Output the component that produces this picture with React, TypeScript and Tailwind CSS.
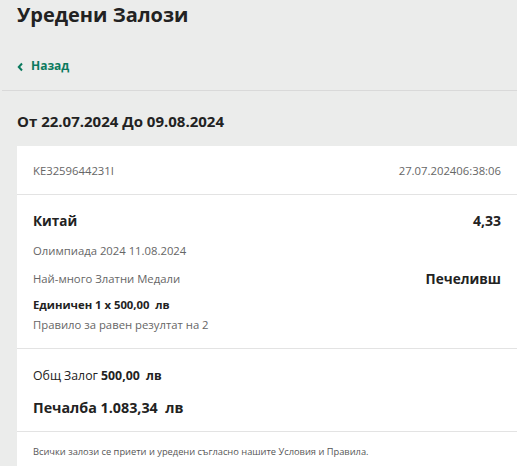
import React from "react";

function Row({ left, right }: { left: React.ReactNode; right?: React.ReactNode }) {
  return (
    <div className="flex items-center justify-between">
      {left}
      {right}
    </div>
  );
}

export default function App() {
  return (
    <div
      className="min-h-screen w-[517px] h-[466px] overflow-hidden bg-[#ebeceb] text-[#222]"
      style={{ fontFamily: '"Open Sans", "Noto Sans", sans-serif' }}
    >
      <h1 className="px-[17px] pt-0 text-[20px] leading-[30px] font-bold text-[#222]">Уредени Залози</h1>

      <div className="px-[17px] pt-[27px] pb-[15px] flex items-center gap-[7px] text-[#0b7a5e]">
        <svg width="7" height="10" viewBox="0 0 7 10" className="mt-[1px]">
          <path d="M5 1.5 L1.8 5 L5 8.5" stroke="currentColor" strokeWidth="2" fill="none" />
        </svg>
        <span className="text-[12px] font-bold leading-[18px]">Назад</span>
      </div>

      <div className="ml-[2px] h-[1px] bg-[#d9d9d9]" />

      <h2 className="px-[17px] pt-[20px] pb-[15px] text-[15px] font-bold leading-[20px]">
        От 22.07.2024 До 09.08.2024
      </h2>

      <div className="ml-[17px] bg-white">
        <div className="pl-[16px] pr-[16px] pt-[3px] h-[48px] flex items-center">
          <div className="w-full">
            <Row
              left={<span className="text-[11.3px] text-[#666]">KE3259644231I</span>}
              right={<span className="text-[11.3px] text-[#666]">27.07.202406:38:06</span>}
            />
          </div>
        </div>
        <div className="h-[1px] bg-[#e3e3e3]" />

        <div className="pl-[16px] pr-[16px] pt-[16px] pb-[15px]">
          <Row
            left={<span className="text-[13.5px] font-bold leading-[20px]">Китай</span>}
            right={<span className="text-[14px] font-bold leading-[20px]">4,33</span>}
          />
          <div className="mt-[12px] text-[11.3px] leading-[16px] text-[#666]">Олимпиада 2024 11.08.2024</div>
          <div className="mt-[11px]">
            <Row
              left={<span className="text-[11.3px] leading-[18px] text-[#666]">Най-много Златни Медали</span>}
              right={<span className="text-[13.6px] font-bold leading-[18px]">Печеливш</span>}
            />
          </div>
          <div className="mt-[9px] text-[11.3px] font-bold leading-[16px] whitespace-pre">Единичен 1 x 500,00  лв</div>
          <div className="mt-[4px] text-[11.3px] leading-[16px] text-[#666]">Правило за равен резултат на 2</div>
        </div>
        <div className="h-[1px] bg-[#e3e3e3]" />

        <div className="pl-[16px] pr-[16px] pt-[18px] pb-[13px]">
          <div className="text-[12.3px] leading-[18px] whitespace-pre">
            Общ Залог <span className="font-bold">500,00  лв</span>
          </div>
          <div className="mt-[13px] text-[14.3px] font-bold leading-[20px] whitespace-pre">Печалба 1.083,34  лв</div>
        </div>
        <div className="h-[1px] bg-[#e3e3e3]" />

        <div className="pl-[16px] pr-[16px] pt-[13px] pb-[12px] text-[9.3px] leading-[14px] text-[#555]">
          Всички залози се приети и уредени съгласно нашите Условия и Правила.
        </div>
      </div>
    </div>
  );
}
